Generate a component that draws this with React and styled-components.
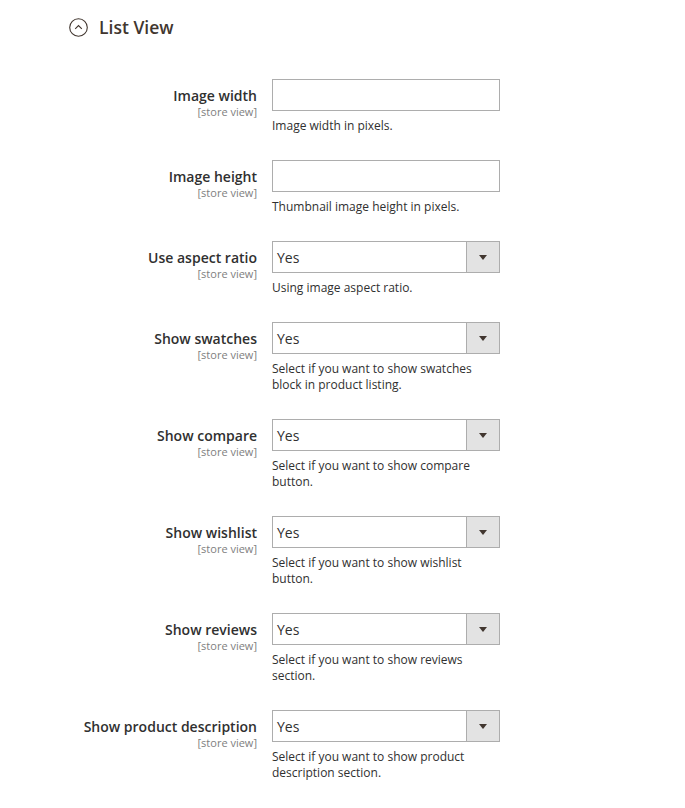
import React from 'react';
import styled, { createGlobalStyle } from 'styled-components';

// base page styles, Magento admin look
const GlobalStyle = createGlobalStyle`
  body {
    margin: 0;
    background: #ffffff;
    font-family: "Open Sans", "Liberation Sans", sans-serif;
    color: #303030;
  }
`;

const Section = styled.div`
  padding: 15px 0 20px 0;
`;

const Header = styled.div`
  display: flex;
  align-items: center;
  height: 24px;
  margin-left: 69px;
  margin-bottom: 40px;
`;

const Title = styled.span`
  margin-left: 11px;
  font-size: 17.5px;
  font-weight: 600;
  line-height: 24px;
  color: #41362f;
`;

const Row = styled.div`
  display: grid;
  grid-template-columns: 197px 228px;
  column-gap: 15px;
  padding-left: 60px;
  padding-bottom: 26px;
`;

const LabelBox = styled.div`
  text-align: right;
  padding-top: 7px;
`;

const LabelText = styled.div`
  font-size: 14px;
  font-weight: 600;
  line-height: 20px;
  color: #303030;
`;

const Scope = styled.div`
  font-size: 11px;
  line-height: 11px;
  color: #808080;
`;

const TextInput = styled.input`
  display: block;
  box-sizing: border-box;
  width: 228px;
  height: 32px;
  margin: 0;
  border: 1px solid #adadad;
  background: #fff;
  font-family: inherit;
  font-size: 14px;
  padding: 0 4px;
`;

const Select = styled.div`
  display: flex;
  box-sizing: border-box;
  width: 228px;
  height: 32px;
  border: 1px solid #adadad;
  background: #fff;
`;

const SelectValue = styled.span`
  flex: 1;
  padding-left: 4px;
  font-size: 14px;
  line-height: 31px;
  color: #303030;
`;

const ArrowBox = styled.span`
  display: flex;
  align-items: center;
  justify-content: center;
  width: 32px;
  border-left: 1px solid #adadad;
  background: #e3e3e3;
`;

const Arrow = styled.span`
  width: 0;
  height: 0;
  border-left: 4px solid transparent;
  border-right: 4px solid transparent;
  border-top: 5px solid #41362f;
`;

const Note = styled.div`
  margin-top: 7px;
  font-size: 12px;
  line-height: 16px;
  color: #303030;
`;

const fields = [
  { label: 'Image width', type: 'text', note: 'Image width in pixels.' },
  { label: 'Image height', type: 'text', note: 'Thumbnail image height in pixels.' },
  { label: 'Use aspect ratio', type: 'select', note: 'Using image aspect ratio.' },
  { label: 'Show swatches', type: 'select', note: 'Select if you want to show swatches block in product listing.' },
  { label: 'Show compare', type: 'select', note: 'Select if you want to show compare button.' },
  { label: 'Show wishlist', type: 'select', note: 'Select if you want to show wishlist button.' },
  { label: 'Show reviews', type: 'select', note: 'Select if you want to show reviews section.' },
  { label: 'Show product description', type: 'select', note: 'Select if you want to show product description section.' }
];

function CollapseIcon () {
  return (
    <svg width="19" height="19" viewBox="0 0 19 19">
      <circle cx="9.5" cy="9.5" r="8.8" fill="none" stroke="#41362f" strokeWidth="1.1" />
      <polyline points="6.2,10.8 9.5,7.5 12.8,10.8" fill="none" stroke="#41362f" strokeWidth="1.1" />
    </svg>
  );
}

function Field ({ label, type, note }) {
  return (
    <Row>
      <LabelBox>
        <LabelText>{label}</LabelText>
        <Scope>[store view]</Scope>
      </LabelBox>
      <div>
        {type === 'text'
          ? <TextInput type="text" />
          : (
            <Select>
              <SelectValue>Yes</SelectValue>
              <ArrowBox><Arrow /></ArrowBox>
            </Select>
            )}
        <Note>{note}</Note>
      </div>
    </Row>
  );
}

export default function App () {
  return (
    <>
      <GlobalStyle />
      <Section>
        <Header>
          <CollapseIcon />
          <Title>List View</Title>
        </Header>
        {fields.map((f) => (
          <Field key={f.label} {...f} />
        ))}
      </Section>
    </>
  );
}
